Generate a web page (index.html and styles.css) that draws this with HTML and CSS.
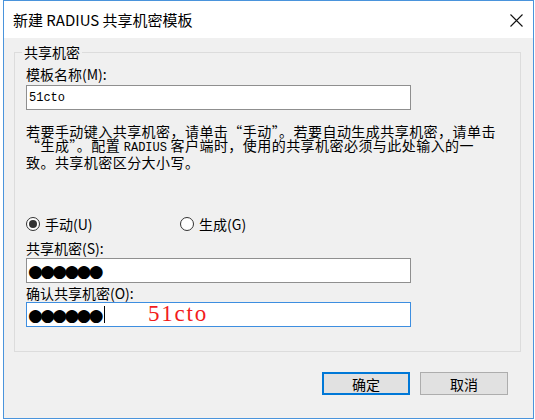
FILE: index.html
```html
<!DOCTYPE html>
<html lang="zh-CN">
<head>
  <meta charset="UTF-8">
  <title>新建 RADIUS 共享机密模板</title>
  <link rel="stylesheet" href="styles.css">
</head>
<body>
  <div class="window">
    <div class="titlebar">
      <span class="title">新建 RADIUS 共享机密模板</span>
      <svg class="close" width="13" height="13" viewBox="0 0 13 13">
        <path d="M0.5 0.5 L12.5 12.5 M12.5 0.5 L0.5 12.5" stroke="#111" stroke-width="1.1" fill="none"/>
      </svg>
    </div>

    <div class="content">
      <fieldset class="group">
        <legend>共享机密</legend>

        <div class="label label-first">模板名称(M):</div>
        <div class="textbox"><span class="value">51cto</span></div>

        <p class="hint">
          若要手动键入共享机密，请单击“手动”。若要自动生成共享机密，请单击<br>
          “生成”。配置 <span class="mono">RADIUS</span> 客户端时，使用的共享机密必须与此处输入的一<br>
          致。共享机密区分大小写。
        </p>

        <div class="radios">
          <label class="radio"><span class="circle checked"></span>手动(U)</label>
          <label class="radio"><span class="circle"></span>生成(G)</label>
        </div>

        <div class="label">共享机密(S):</div>
        <div class="textbox"><span class="mask">●●●●●●</span></div>

        <div class="label label-tight">确认共享机密(O):</div>
        <div class="textbox focused">
          <span class="mask">●●●●●●</span><span class="caret"></span>
          <span class="note">51cto</span>
        </div>
      </fieldset>

      <div class="buttons">
        <button class="btn default">确定</button>
        <button class="btn">取消</button>
      </div>
    </div>
  </div>
</body>
</html>
```

FILE: styles.css
```css
body {
  margin: 0;
  background: #fff;
  font-family: "Noto Sans CJK SC", sans-serif;
  color: #000;
}

.window {
  box-sizing: border-box;
  width: 531px;
  height: 419px;
  margin-left: 3px;
  border: 1px solid #4a94dc;
  background: #f0f0f0;
  display: flex;
  flex-direction: column;
}

.titlebar {
  height: 36px;
  background: #fff;
  display: flex;
  align-items: center;
  justify-content: space-between;
  padding: 1px 10px 0 9px;
}

.title {
  font-size: 15px;
  line-height: 18px;
}

.content {
  flex: 1;
  padding: 7px 12px 0 10px;
}

.group {
  box-sizing: border-box;
  width: 507px;
  height: 307px;
  margin: 0;
  padding: 0 10px 0 11px;
  border: 1px solid #dcdcdc;
}

.group legend {
  font-size: 14px;
  line-height: 14px;
  padding: 0 2px;
  margin-left: -4px;
}

.label {
  font-size: 14px;
  line-height: 16px;
  margin-top: 2px;
}

.label-first {
  margin-top: 7px;
}

.label-tight {
  margin-top: 2px;
}

.textbox {
  position: relative;
  box-sizing: border-box;
  width: 385px;
  height: 25px;
  margin-top: 2px;
  border: 1px solid #8f8f8f;
  background: #fff;
  display: flex;
  align-items: center;
  padding-left: 1px;
}

.label-first + .textbox {
  margin-top: 3px;
}

.textbox.focused {
  border-color: #3d8ee0;
  margin-top: 1px;
}

.value {
  font-family: "Liberation Mono", monospace;
  font-size: 12px;
  padding-left: 1px;
}

.mask {
  font-family: "DejaVu Sans", sans-serif;
  font-size: 17px;
  line-height: 18px;
  letter-spacing: -2.7px;
}

.caret {
  width: 1px;
  height: 17px;
  background: #000;
  margin-left: 3px;
}

.note {
  position: absolute;
  left: 121px;
  top: -2px;
  font-family: "Liberation Serif", serif;
  font-size: 23px;
  line-height: 26px;
  letter-spacing: 1.8px;
  color: #f21c1c;
}

.hint {
  margin: 14px 0 0;
  font-size: 14px;
  line-height: 14px;
  letter-spacing: 0.45px;
  white-space: nowrap;
}

.mono {
  font-family: "Liberation Mono", monospace;
  font-size: 12px;
  letter-spacing: 0;
}

.radios {
  display: flex;
  margin-top: 47px;
  height: 16px;
}

.radio {
  width: 154px;
  display: flex;
  align-items: center;
  gap: 5px;
  font-size: 14px;
  line-height: 16px;
}

.circle {
  box-sizing: border-box;
  width: 14px;
  height: 14px;
  border: 1px solid #333;
  border-radius: 50%;
  background: #fff;
  display: flex;
  align-items: center;
  justify-content: center;
}

.circle.checked::after {
  content: "";
  width: 8px;
  height: 8px;
  border-radius: 50%;
  background: #333;
}

.radios + .label {
  margin-top: 8px;
}

.buttons {
  display: flex;
  justify-content: flex-end;
  gap: 10px;
  margin-top: 20px;
  padding-right: 13px;
}

.btn {
  box-sizing: border-box;
  width: 88px;
  height: 23px;
  border: 1px solid #adadad;
  background: #e1e1e1;
  font-family: "Noto Sans CJK SC", sans-serif;
  font-size: 14px;
  line-height: 18px;
  padding: 0;
  color: #000;
}

.btn.default {
  border: 2px solid #0078d7;
}
```
